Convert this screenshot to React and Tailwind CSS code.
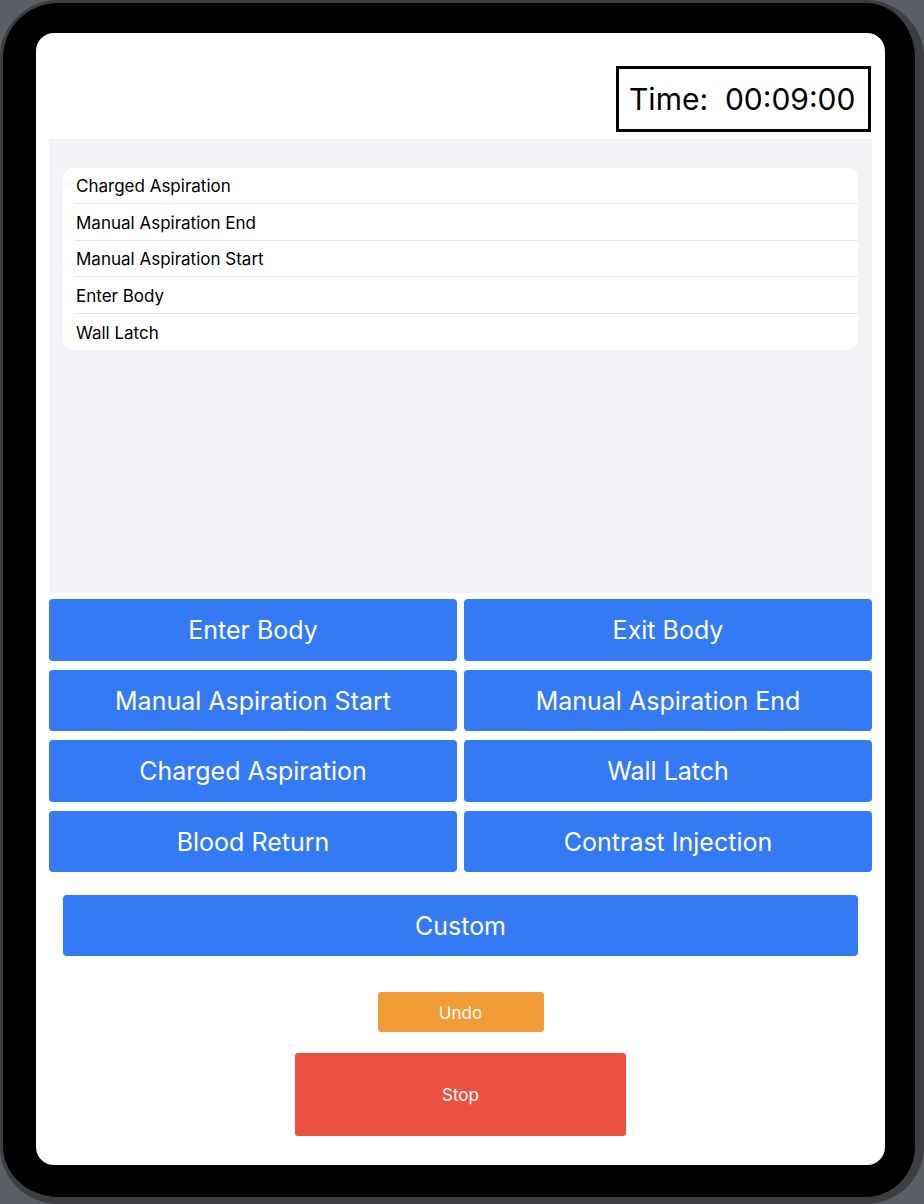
import React from "react";

const font = { fontFamily: "Inter, 'Noto Sans', sans-serif" };

const logItems = [
  "Charged Aspiration",
  "Manual Aspiration End",
  "Manual Aspiration Start",
  "Enter Body",
  "Wall Latch",
];

const buttons = [
  "Enter Body",
  "Exit Body",
  "Manual Aspiration Start",
  "Manual Aspiration End",
  "Charged Aspiration",
  "Wall Latch",
  "Blood Return",
  "Contrast Injection",
];

export default function App() {
  return (
    <div className="w-[924px] h-[1204px] bg-[#5b5e65] overflow-hidden" style={font}>
      <div className="w-full h-full rounded-[58px] bg-black border-l-[3px] border-t-[3px] border-r-[9px] border-b-[7px] border-[#3d3e42] pl-[33px] pt-[30px] pr-[30px] pb-[32px]">
        <div className="w-[849px] h-[1132px] bg-white rounded-[18px] flex flex-col items-stretch overflow-hidden">
          <div className="flex justify-end pt-[33px] pr-[14px]">
            <div className="w-[255px] h-[66px] border-[3px] border-black flex items-center pl-[10px] text-[30px] text-black whitespace-pre leading-none">
              {"Time:  00:09:00"}
            </div>
          </div>
          <div className="mx-[13px] mt-[7px] h-[454px] bg-[#f2f2f7] px-[14px] pt-[29px]">
            <div className="bg-white rounded-[10px] overflow-hidden">
              {logItems.map((t, i) => (
                <div key={i} className="pl-[13px] h-[36.4px] flex flex-col">
                  <div className="flex-1 flex items-center pt-[3px] text-[17px] text-black">{t}</div>
                  {i < logItems.length - 1 && <div className="h-px bg-[#e3e3e8]" />}
                </div>
              ))}
            </div>
          </div>
          <div className="mx-[13px] mt-[6px] grid grid-cols-2 gap-x-[7px] gap-y-[9px]">
            {buttons.map((b) => (
              <div
                key={b}
                className="h-[61.5px] bg-[#357af5] rounded-[4px] flex items-center justify-center pt-[2px] text-white text-[25px]"
              >
                {b}
              </div>
            ))}
          </div>
          <div className="mx-[27px] mt-[23px] h-[61px] bg-[#357af5] rounded-[4px] flex items-center justify-center pt-[2px] text-white text-[25px]">
            Custom
          </div>
          <div className="flex flex-col items-center mt-[36px]">
            <div className="w-[166px] h-[40px] bg-[#f29c38] rounded-[3px] flex items-center justify-center pt-[4px] text-white text-[17px]">
              Undo
            </div>
            <div className="mt-[21px] w-[331px] h-[83px] bg-[#eb5140] rounded-[3px] flex items-center justify-center pt-[3px] text-white text-[17px]">
              Stop
            </div>
          </div>
        </div>
      </div>
    </div>
  );
}
